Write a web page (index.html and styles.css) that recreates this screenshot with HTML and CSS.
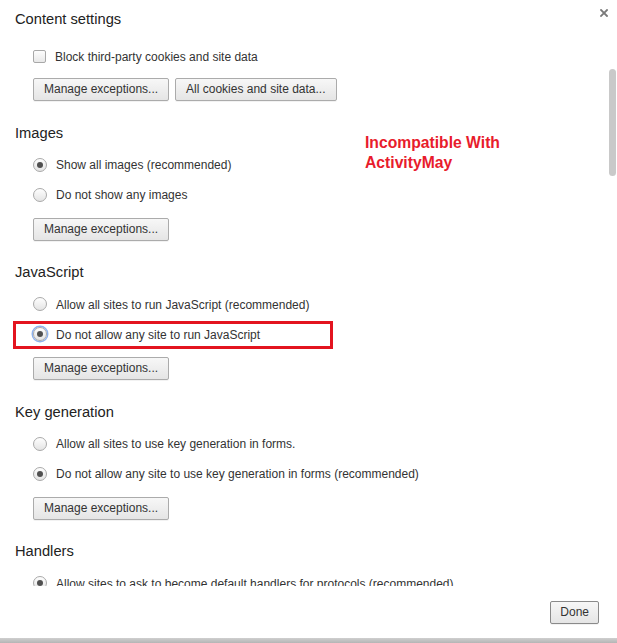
FILE: index.html
```html
<!DOCTYPE html>
<html>
<head>
<meta charset="utf-8">
<link rel="stylesheet" href="styles.css">
</head>
<body>
<div class="dialog">
  <div class="header">
    <h1 class="title">Content settings</h1>
  </div>
  <div class="scroll">
    <div class="section first">
      <div class="row"><span class="checkbox"></span><span class="label">Block third-party cookies and site data</span></div>
      <div class="buttons"><button class="btn">Manage exceptions...</button><button class="btn">All cookies and site data...</button></div>
    </div>
    <div class="section">
      <h2 class="heading">Images</h2>
      <div class="row"><span class="radio on"></span><span class="label">Show all images (recommended)</span></div>
      <div class="row"><span class="radio"></span><span class="label">Do not show any images</span></div>
      <div class="buttons"><button class="btn">Manage exceptions...</button></div>
    </div>
    <div class="section">
      <h2 class="heading">JavaScript</h2>
      <div class="row"><span class="radio"></span><span class="label">Allow all sites to run JavaScript (recommended)</span></div>
      <div class="row"><span class="radio on focus"></span><span class="label">Do not allow any site to run JavaScript</span></div>
      <div class="buttons"><button class="btn">Manage exceptions...</button></div>
    </div>
    <div class="section">
      <h2 class="heading">Key generation</h2>
      <div class="row"><span class="radio"></span><span class="label">Allow all sites to use key generation in forms.</span></div>
      <div class="row"><span class="radio on"></span><span class="label">Do not allow any site to use key generation in forms (recommended)</span></div>
      <div class="buttons"><button class="btn">Manage exceptions...</button></div>
    </div>
    <div class="section">
      <h2 class="heading">Handlers</h2>
      <div class="row"><span class="radio on"></span><span class="label">Allow sites to ask to become default handlers for protocols (recommended)</span></div>
    </div>
  </div>
  <div class="footer">
    <button class="btn done">Done</button>
  </div>
  <svg class="close" width="8" height="8" viewBox="0 0 8 8"><path d="M1 1L7 7M7 1L1 7" stroke="#7a7a7a" stroke-width="1.8" stroke-linecap="square"/></svg>
  <div class="scrollbar"></div>
  <div class="note">Incompatible With<br>ActivityMay</div>
  <div class="highlight"></div>
</div>
<div class="shadow"></div>
</body>
</html>
```

FILE: styles.css
```css
html, body {
  margin: 0;
  padding: 0;
  background: #ffffff;
}
body {
  width: 617px;
  height: 643px;
  overflow: hidden;
  font-family: "Liberation Sans", Arial, sans-serif;
  color: #333;
}
.dialog {
  position: relative;
  width: 617px;
  height: 638px;
  display: flex;
  flex-direction: column;
  background: #fff;
}
.header {
  height: 34px;
  box-sizing: border-box;
  padding: 9px 15px 0;
}
.title {
  margin: 0;
  font-size: 14.7px;
  font-weight: normal;
  line-height: 20px;
  color: #222;
}
.scroll {
  height: 552px;
  overflow: hidden;
  padding: 0 15px;
}
.section {
  display: flex;
  flex-direction: column;
  align-items: flex-start;
  margin-top: 21.5px;
}
.section.first {
  margin-top: 12px;
}
.heading {
  margin: 0 0 12px;
  font-size: 14.7px;
  font-weight: normal;
  line-height: 20px;
  color: #222;
}
.row {
  display: flex;
  align-items: center;
  height: 20px;
  margin-left: 18px;
  margin-bottom: 10px;
}
.row + .buttons {
  margin-top: 3px;
}
.first .row {
  margin-bottom: 12px;
}
.first .row + .buttons {
  margin-top: 0;
}
.label {
  font-size: 12px;
  line-height: 20px;
  color: #333;
  white-space: nowrap;
  position: relative;
  top: 0.5px;
}
.checkbox {
  width: 13px;
  height: 13px;
  box-sizing: border-box;
  border: 1px solid #a8a8a8;
  border-radius: 2px;
  background: linear-gradient(#fdfdfd, #e8e8e8);
  margin-right: 9px;
  flex: none;
}
.radio {
  position: relative;
  width: 14px;
  height: 14px;
  box-sizing: border-box;
  border: 1px solid #a9a9a9;
  border-radius: 50%;
  background: linear-gradient(#fefefe, #e4e4e4);
  margin-right: 9px;
  flex: none;
}
.radio.on::after {
  content: "";
  position: absolute;
  left: 3px;
  top: 3px;
  width: 6px;
  height: 6px;
  border-radius: 50%;
  background: #505050;
}
.radio.focus {
  box-shadow: 0 0 0 1.5px #8eb2ec;
}
.buttons {
  display: flex;
  gap: 6px;
  margin-left: 18px;
}
.btn {
  height: 23px;
  box-sizing: border-box;
  padding: 0 10px;
  border: 1px solid #ababab;
  border-radius: 2px;
  background: linear-gradient(#f7f7f7, #e5e5e5);
  box-shadow: 0 1px 0 rgba(0,0,0,0.05);
  font-family: "Liberation Sans", Arial, sans-serif;
  font-size: 12px;
  color: #333;
  line-height: 21px;
  white-space: nowrap;
}
.footer {
  flex: 1;
  display: flex;
  justify-content: flex-end;
  align-items: flex-start;
  padding: 15px 18px 0 0;
}
.done {
  padding: 0 9px;
  border-color: #8a8a8a;
}
.close {
  position: absolute;
  left: 600px;
  top: 9px;
}
.scrollbar {
  position: absolute;
  left: 609px;
  top: 69px;
  width: 7px;
  height: 107px;
  border-radius: 3.5px;
  background: #c9c9c9;
}
.note {
  position: absolute;
  left: 365px;
  top: 133px;
  font-size: 15.7px;
  font-weight: bold;
  line-height: 20px;
  color: #e81c2c;
}
.highlight {
  position: absolute;
  left: 13px;
  top: 321px;
  width: 320px;
  height: 28px;
  box-sizing: border-box;
  border: 3px solid #e3141f;
}
.shadow {
  height: 5px;
  background: linear-gradient(#cfcfcf, #b5b5b5);
}
```
